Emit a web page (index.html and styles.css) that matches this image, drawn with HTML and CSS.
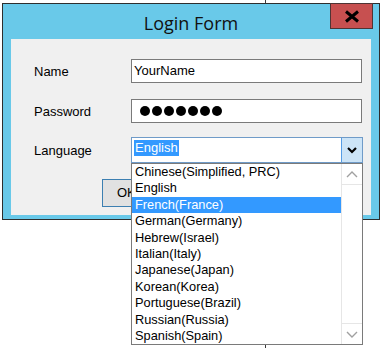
FILE: index.html
```html
<!DOCTYPE html>
<html lang="en">
<head>
    <meta charset="UTF-8">
    <title>Login Form</title>
    <link rel="stylesheet" href="styles.css">
</head>
<body>
    <div class="backline"></div>
    <div class="window">
        <div class="titlebar">
            <span class="title">Login Form</span>
            <div class="close">
                <svg width="16" height="13" viewBox="0 0 16 13">
                    <path d="M2 1.5 L14 11.5 M14 1.5 L2 11.5" stroke="#000" stroke-width="3" fill="none"/>
                </svg>
            </div>
        </div>
        <div class="client">
            <div class="row">
                <span class="label">Name</span>
                <div class="textbox">YourName</div>
            </div>
            <div class="row">
                <span class="label">Password</span>
                <div class="textbox dots">
                    <span class="dot"></span><span class="dot"></span><span class="dot"></span><span class="dot"></span><span class="dot"></span><span class="dot"></span><span class="dot"></span>
                </div>
            </div>
            <div class="row">
                <span class="label">Language</span>
                <div class="combo">
                    <div class="combo-text"><span class="selected">English</span></div>
                    <div class="combo-btn">
                        <svg width="10" height="7" viewBox="0 0 10 7">
                            <path d="M1 1 L5 5 L9 1" stroke="#000" stroke-width="2.2" fill="none"/>
                        </svg>
                    </div>
                    <div class="droplist">
                        <div class="items">
                            <div class="item">Chinese(Simplified, PRC)</div>
                            <div class="item">English</div>
                            <div class="item active">French(France)</div>
                            <div class="item">German(Germany)</div>
                            <div class="item">Hebrew(Israel)</div>
                            <div class="item">Italian(Italy)</div>
                            <div class="item">Japanese(Japan)</div>
                            <div class="item">Korean(Korea)</div>
                            <div class="item">Portuguese(Brazil)</div>
                            <div class="item">Russian(Russia)</div>
                            <div class="item">Spanish(Spain)</div>
                        </div>
                        <div class="scrollbar">
                            <div class="arrow">
                                <svg width="12" height="7" viewBox="0 0 12 7"><path d="M1 6 L6 1 L11 6" stroke="#a0a0a0" stroke-width="1.4" fill="none"/></svg>
                            </div>
                            <div class="track"></div>
                            <div class="arrow">
                                <svg width="12" height="7" viewBox="0 0 12 7"><path d="M1 1 L6 6 L11 1" stroke="#a0a0a0" stroke-width="1.4" fill="none"/></svg>
                            </div>
                        </div>
                    </div>
                </div>
            </div>
            <div class="buttons">
                <div class="btn">OK</div>
            </div>
        </div>
    </div>
</body>
</html>
```

FILE: styles.css
```css
body {
    margin: 0;
    background: #ffffff;
    font-family: "Liberation Sans", Arial, sans-serif;
    font-size: 13px;
    color: #000;
    height: 348px;
    overflow: hidden;
}

/* ligne derriere la fenetre */
.backline {
    position: absolute;
    left: 265px;
    top: 0;
    width: 1px;
    height: 348px;
    background: #3a3a3a;
}

.window {
    position: relative;
    margin: 3px 0 0 2px;
    width: 378px;
    height: 217px;
    box-sizing: border-box;
    border: 1px solid #2e2e2e;
    background: #69c9e9;
    padding: 0 8px 4px 8px;
}

.titlebar {
    height: 35px;
    display: flex;
    justify-content: center;
    align-items: center;
}

.title {
    font-family: "Open Sans", "Noto Sans", sans-serif;
    font-size: 18px;
    color: #111;
    margin-top: 2px;
}

.close {
    position: absolute;
    top: -1px;
    right: 6px;
    width: 43px;
    height: 26px;
    box-sizing: border-box;
    background: #c75050;
    border: 1px solid #4f3434;
    display: flex;
    justify-content: center;
    align-items: center;
}

.client {
    height: 176px;
    box-sizing: border-box;
    background: #f0f0f0;
    padding: 20px 0 0 23px;
}

.row {
    display: flex;
    align-items: center;
    margin-bottom: 16px;
}

.row:nth-child(2) {
    margin-bottom: 14px;
}

.label {
    width: 97px;
}

.textbox {
    width: 231px;
    height: 24px;
    box-sizing: border-box;
    border: 1px solid #7a7a7a;
    background: #fff;
    padding-left: 2px;
    line-height: 22px;
}

.dots {
    display: flex;
    align-items: center;
    gap: 2px;
    padding-left: 8px;
}

.dot {
    width: 10px;
    height: 10px;
    border-radius: 50%;
    background: #000;
}

.combo {
    position: relative;
    width: 232px;
    height: 26px;
    box-sizing: border-box;
    border: 1px solid #6f9bc8;
    background: #fff;
    display: flex;
}

.combo-text {
    flex: 1;
    padding: 2px 0 0 2px;
}

.selected {
    display: inline-block;
    background: #3399ff;
    color: #fff;
    height: 16px;
    line-height: 16px;
    padding: 0 1px;
}

.combo-btn {
    width: 20px;
    background: #cce4f7;
    border-left: 1px solid #569de5;
    display: flex;
    justify-content: center;
    align-items: center;
}

.droplist {
    position: absolute;
    top: 25px;
    left: -1px;
    width: 232px;
    height: 182px;
    box-sizing: border-box;
    border: 1px solid #7a7a7a;
    background: #fff;
    display: flex;
    z-index: 2;
}

.items {
    flex: 1;
    font-size: 12.8px;
}

.item {
    height: 16.4px;
    line-height: 16.4px;
    padding-left: 3px;
    white-space: nowrap;
}

.item.active {
    background: #3399ff;
    color: #fff;
}

.scrollbar {
    width: 20px;
    display: flex;
    flex-direction: column;
    border-left: 1px solid #e6e6e6;
    background: #fff;
}

.arrow {
    height: 20px;
    display: flex;
    justify-content: center;
    align-items: center;
    border-bottom: 1px solid #e6e6e6;
}

.arrow:last-child {
    border-bottom: none;
    border-top: 1px solid #e6e6e6;
}

.track {
    flex: 1;
}

.buttons {
    padding-left: 68px;
}

.btn {
    width: 50px;
    height: 28px;
    box-sizing: border-box;
    border: 1px solid #3c7fb1;
    background: #e1e1e1;
    line-height: 26px;
    padding-left: 14px;
}
```
